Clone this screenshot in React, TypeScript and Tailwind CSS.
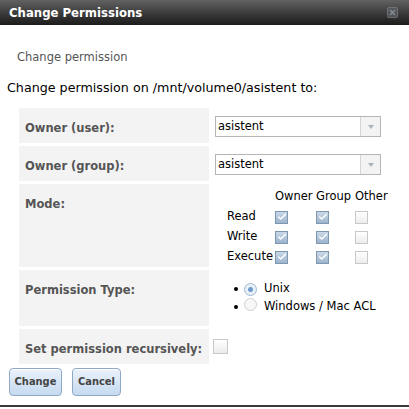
import { Check } from 'lucide-react';

function Box({ checked, size = 'w-[13px] h-[13px]' }: { checked: boolean; size?: string }) {
  return (
    <span
      className={`inline-flex items-center justify-center border ${size} ${
        checked
          ? 'border-[#7f96af] bg-gradient-to-b from-[#c9d8e8] to-[#9db4cd]'
          : 'border-[#c8c8c8] bg-gradient-to-b from-white to-[#ececec]'
      }`}
    >
      {checked && <Check className="w-[10px] h-[10px] text-white" strokeWidth={3.5} />}
    </span>
  );
}

function Radio({ checked }: { checked: boolean }) {
  return (
    <span
      className={`inline-flex items-center justify-center w-[13px] h-[13px] rounded-full border ${
        checked ? 'border-[#9fb8d2] bg-[#e8f0f8]' : 'border-[#cfcfcf] bg-[#f7f7f7]'
      }`}
    >
      {checked && <span className="w-[5px] h-[5px] rounded-full bg-[#6f9bcb]" />}
    </span>
  );
}

function Select({ value }: { value: string }) {
  return (
    <div className="flex h-[21px] w-[166px] border border-[#b5b5b5] bg-white">
      <span className="flex-1 pl-[2px] leading-[19px] text-[11.5px] text-black">{value}</span>
      <span className="flex w-[20px] items-center justify-center border-l border-[#d4d4d4] bg-[#f3f3f3]">
        <span className="h-0 w-0 border-x-[3px] border-t-[4px] border-x-transparent border-t-[#aab4be]" />
      </span>
    </div>
  );
}

export default function App() {
  const modeRows = [
    { name: 'Read', bits: [true, true, false] },
    { name: 'Write', bits: [true, true, false] },
    { name: 'Execute', bits: [true, true, false] },
  ];

  const label = 'pl-[6px] pt-[12px] bg-[#f3f3f3] font-bold text-[11.5px] text-[#555] whitespace-nowrap';

  return (
    <div className="w-[409px] h-[409px] bg-white text-[11.5px] font-['DejaVu_Sans',sans-serif] flex flex-col overflow-hidden">
      <div className="h-[25px] shrink-0 flex items-center justify-between pl-[9px] pr-[11px] bg-gradient-to-b from-[#626262] to-[#1c1c1c]">
        <span className="text-white font-bold text-[13px] font-['DejaVu_Sans_Condensed','DejaVu_Sans',sans-serif]">
          Change Permissions
        </span>
        <svg width="11" height="11" viewBox="0 0 11 11" className="opacity-70">
          <rect x="0.5" y="0.5" width="10" height="10" rx="1.5" fill="#5a5f66" stroke="#80868e" />
          <path d="M3 3l5 5M8 3l-5 5" stroke="#a4aab2" strokeWidth="1.6" />
        </svg>
      </div>

      <div className="pl-[17px] pt-[24px] text-[#555] leading-[16px]">Change permission</div>
      <div className="pl-[7px] pt-[15px] text-black text-[12.7px] leading-[16px]">
        Change permission on /mnt/volume0/asistent to:
      </div>

      <div className="ml-[19px] mt-[12px] grid grid-cols-[190px_1fr] gap-y-[3px]">
        <div className={`${label} h-[35px]`}>Owner (user):</div>
        <div className="pl-[6px] pt-[8px]"><Select value="asistent" /></div>

        <div className={`${label} h-[35px]`}>Owner (group):</div>
        <div className="pl-[6px] pt-[8px]"><Select value="asistent" /></div>

        <div className={`${label} h-[83px]`}>Mode:</div>
        <div className="pl-[18px] pt-[3px]">
          <div className="grid grid-cols-[48px_41px_39px_40px] auto-rows-[20px] items-center text-black">
            <span />
            <span>Owner</span>
            <span>Group</span>
            <span>Other</span>
            {modeRows.map((r) => (
              <div key={r.name} className="contents">
                <span>{r.name}</span>
                {r.bits.map((b, i) => (
                  <span key={i} className="flex"><Box checked={b} /></span>
                ))}
              </div>
            ))}
          </div>
        </div>

        <div className={`${label} h-[56px]`}>Permission Type:</div>
        <div className="pl-[25px] pt-[10px] text-black">
          {[
            { t: 'Unix', on: true },
            { t: 'Windows / Mac ACL', on: false },
          ].map((o) => (
            <div key={o.t} className="flex items-center h-[18px]">
              <span className="w-[4px] h-[4px] rounded-full bg-black" />
              <span className="ml-[6px]"><Radio checked={o.on} /></span>
              <span className="ml-[7px]">{o.t}</span>
            </div>
          ))}
        </div>

        <div className={`${label} h-[35px]`}>Set permission recursively:</div>
        <div className="pl-[4px] pt-[10px]"><Box checked={false} size="w-[15px] h-[15px]" /></div>
      </div>

      <div className="flex gap-[10px] pl-[9px] mt-[4px]">
        {[
          { t: 'Change', w: 'w-[53px]' },
          { t: 'Cancel', w: 'w-[49px]' },
        ].map((b) => (
          <button
            key={b.t}
            className={`${b.w} h-[28px] rounded-[4px] border border-[#8fa8c4] bg-gradient-to-b from-[#eaf2fb] to-[#c5daf0] font-bold text-[11px] font-['DejaVu_Sans_Condensed','DejaVu_Sans',sans-serif] text-[#444] shadow-[inset_0_1px_0_#fff]`}
          >
            {b.t}
          </button>
        ))}
      </div>

      <div className="mt-auto mb-[2px] h-[2px] bg-[#3a3a3a]" />
    </div>
  );
}
